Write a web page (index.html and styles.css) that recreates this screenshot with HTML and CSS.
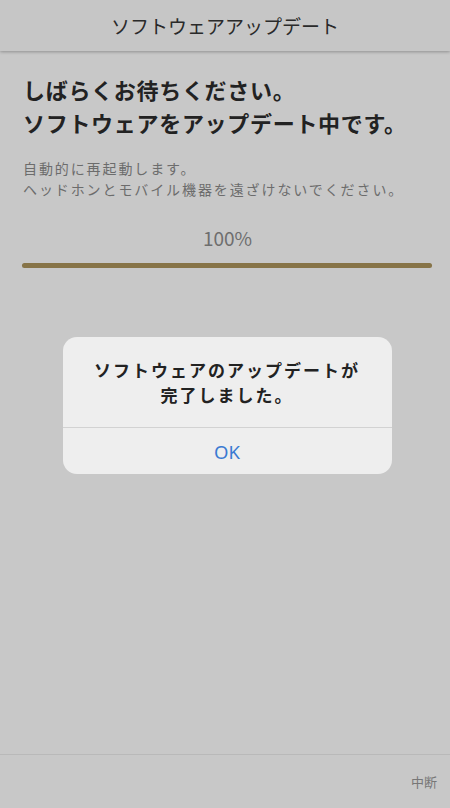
FILE: index.html
```html
<!DOCTYPE html>
<html lang="ja">
<head>
  <meta charset="UTF-8">
  <title>ソフトウェアアップデート</title>
  <link rel="stylesheet" href="styles.css">
</head>
<body>
  <div class="screen">
    <header class="top-bar">ソフトウェアアップデート</header>

    <main class="content">
      <h1 class="heading">しばらくお待ちください。<br>ソフトウェアをアップデート中です。</h1>
      <p class="note">自動的に再起動します。<br>ヘッドホンとモバイル機器を遠ざけないでください。</p>
      <div class="percent">100%</div>
      <div class="progress"><div class="progress-fill" style="width: 100%"></div></div>

      <div class="dialog-wrap">
        <div class="dialog">
          <div class="dialog-msg">ソフトウェアのアップデートが<br>完了しました。</div>
          <button class="dialog-btn">OK</button>
        </div>
      </div>
    </main>

    <footer class="bottom-bar">
      <span class="cancel">中断</span>
    </footer>
  </div>
</body>
</html>
```

FILE: styles.css
```css
html, body {
  margin: 0;
  padding: 0;
}
body {
  font-family: "Noto Sans CJK JP", "Noto Sans", sans-serif;
  background-color: #c8c8c8;
  width: 450px;
  height: 808px;
  overflow: hidden;
}
.screen {
  display: flex;
  flex-direction: column;
  height: 808px;
}
.top-bar {
  height: 51px;
  display: flex;
  align-items: center;
  justify-content: center;
  font-size: 19px;
  color: #2a2a2a;
  background-color: #c6c6c6;
  box-shadow: 0 1px 3px rgba(0, 0, 0, 0.28);
  position: relative;
  z-index: 1;
}
.content {
  flex: 1;
  padding: 0 10px 0 23px;
}
.heading {
  margin: 22px 0 0;
  font-size: 22px;
  line-height: 33px;
  font-weight: bold;
  letter-spacing: 0.7px;
  color: #222;
}
.note {
  margin: 19px 0 0;
  font-size: 14px;
  line-height: 20.5px;
  letter-spacing: 1.9px;
  color: #6c6c6c;
  white-space: nowrap;
}
.percent {
  margin-top: 27px;
  margin-right: 8px;
  text-align: center;
  font-size: 19px;
  line-height: 24px;
  color: #6e6e6e;
}
.progress {
  margin: 13px 8px 0 -1px;
  height: 5px;
  border-radius: 3px;
  background-color: #b8b8b8;
}
.progress-fill {
  height: 100%;
  border-radius: 3px;
  background-color: #877448;
}
.dialog-wrap {
  display: flex;
  justify-content: center;
  margin-top: 69px;
  margin-left: -1px;
  margin-right: 8px;
}
.dialog {
  width: 329px;
  background-color: #eeeeee;
  border-radius: 14px;
  overflow: hidden;
}
.dialog-msg {
  padding: 20px 8px 20px;
  text-align: center;
  font-size: 17px;
  line-height: 25px;
  letter-spacing: 2px;
  font-weight: bold;
  color: #222;
}
.dialog-btn {
  display: block;
  width: 100%;
  height: 47px;
  border: none;
  border-top: 1px solid #d2d2d2;
  background: transparent;
  font-family: "Noto Sans", sans-serif;
  font-size: 18.5px;
  color: #3a7ad2;
  padding: 0;
}
.bottom-bar {
  height: 53px;
  border-top: 1px solid #b9b9b9;
  display: flex;
  align-items: center;
  justify-content: flex-end;
  padding-right: 13px;
}
.cancel {
  font-size: 13px;
  color: #777;
}
```
